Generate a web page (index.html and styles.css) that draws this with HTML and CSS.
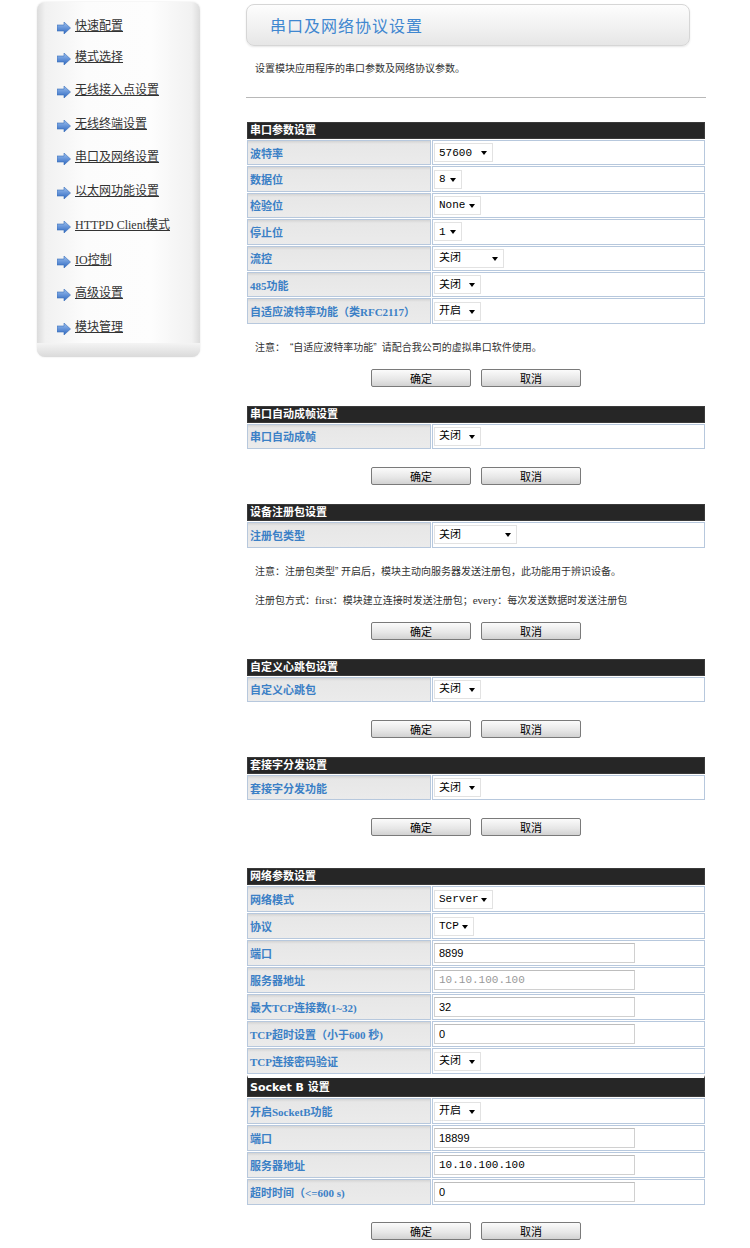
FILE: index.html
```html
<!DOCTYPE html>
<html lang="zh-CN">
<head>
    <meta charset="UTF-8">
    <title>串口及网络协议设置</title>
    <link rel="stylesheet" href="styles.css">
</head>
<body>

<div class="page">
    <!-- 左侧菜单 -->
    <div class="sidebar">
        <ul class="menu">
            <li><svg class="arrow" viewBox="0 0 14 12"><defs><linearGradient id="ag" x1="0" y1="0" x2="0" y2="1"><stop offset="0" stop-color="#9cc0f0"/><stop offset="1" stop-color="#2f68c0"/></linearGradient></defs><polygon points="0,3 7,3 7,0 13.5,6 7,12 7,9 0,9" fill="url(#ag)" stroke="#3a6fb8" stroke-width="0.6"/></svg><a href="#">快速配置</a></li>
            <li><svg class="arrow" viewBox="0 0 14 12"><polygon points="0,3 7,3 7,0 13.5,6 7,12 7,9 0,9" fill="url(#ag)" stroke="#3a6fb8" stroke-width="0.6"/></svg><a href="#">模式选择</a></li>
            <li><svg class="arrow" viewBox="0 0 14 12"><polygon points="0,3 7,3 7,0 13.5,6 7,12 7,9 0,9" fill="url(#ag)" stroke="#3a6fb8" stroke-width="0.6"/></svg><a href="#">无线接入点设置</a></li>
            <li><svg class="arrow" viewBox="0 0 14 12"><polygon points="0,3 7,3 7,0 13.5,6 7,12 7,9 0,9" fill="url(#ag)" stroke="#3a6fb8" stroke-width="0.6"/></svg><a href="#">无线终端设置</a></li>
            <li><svg class="arrow" viewBox="0 0 14 12"><polygon points="0,3 7,3 7,0 13.5,6 7,12 7,9 0,9" fill="url(#ag)" stroke="#3a6fb8" stroke-width="0.6"/></svg><a href="#">串口及网络设置</a></li>
            <li><svg class="arrow" viewBox="0 0 14 12"><polygon points="0,3 7,3 7,0 13.5,6 7,12 7,9 0,9" fill="url(#ag)" stroke="#3a6fb8" stroke-width="0.6"/></svg><a href="#">以太网功能设置</a></li>
            <li class="tall"><svg class="arrow" viewBox="0 0 14 12"><polygon points="0,3 7,3 7,0 13.5,6 7,12 7,9 0,9" fill="url(#ag)" stroke="#3a6fb8" stroke-width="0.6"/></svg><a href="#">HTTPD Client模式</a></li>
            <li><svg class="arrow" viewBox="0 0 14 12"><polygon points="0,3 7,3 7,0 13.5,6 7,12 7,9 0,9" fill="url(#ag)" stroke="#3a6fb8" stroke-width="0.6"/></svg><a href="#">IO控制</a></li>
            <li><svg class="arrow" viewBox="0 0 14 12"><polygon points="0,3 7,3 7,0 13.5,6 7,12 7,9 0,9" fill="url(#ag)" stroke="#3a6fb8" stroke-width="0.6"/></svg><a href="#">高级设置</a></li>
            <li><svg class="arrow" viewBox="0 0 14 12"><polygon points="0,3 7,3 7,0 13.5,6 7,12 7,9 0,9" fill="url(#ag)" stroke="#3a6fb8" stroke-width="0.6"/></svg><a href="#">模块管理</a></li>
        </ul>
        <div class="menu-foot"></div>
    </div>

    <div class="main">
        <div class="title-box"><h1>串口及网络协议设置</h1></div>
        <p class="intro">设置模块应用程序的串口参数及网络协议参数。</p>
        <hr class="line">

        <!-- 串口参数 -->
        <form class="section">
            <table class="cfg">
                <tr><th colspan="2">串口参数设置</th></tr>
                <tr>
                    <td class="lbl">波特率</td>
                    <td class="val"><span class="sel w59"><select><option>57600</option></select></span></td>
                </tr>
                <tr>
                    <td class="lbl">数据位</td>
                    <td class="val"><span class="sel w28"><select><option>8</option></select></span></td>
                </tr>
                <tr>
                    <td class="lbl">检验位</td>
                    <td class="val"><span class="sel w47"><select><option>None</option></select></span></td>
                </tr>
                <tr>
                    <td class="lbl">停止位</td>
                    <td class="val"><span class="sel w28"><select><option>1</option></select></span></td>
                </tr>
                <tr>
                    <td class="lbl">流控</td>
                    <td class="val"><span class="sel w70"><select><option>关闭</option></select></span></td>
                </tr>
                <tr>
                    <td class="lbl">485功能</td>
                    <td class="val"><span class="sel w47"><select><option>关闭</option></select></span></td>
                </tr>
                <tr>
                    <td class="lbl">自适应波特率功能（类RFC2117）</td>
                    <td class="val"><span class="sel w47"><select><option>开启</option></select></span></td>
                </tr>
            </table>
            <p class="note">注意：<span class="ql">“</span>自适应波特率功能<span class="qr">”</span>请配合我公司的虚拟串口软件使用。</p>
            <div class="btns"><button type="button">确定</button><button type="button">取消</button></div>
        </form>

        <form class="section">
            <table class="cfg">
                <tr><th colspan="2">串口自动成帧设置</th></tr>
                <tr>
                    <td class="lbl">串口自动成帧</td>
                    <td class="val"><span class="sel w47"><select><option>关闭</option></select></span></td>
                </tr>
            </table>
            <div class="btns"><button type="button">确定</button><button type="button">取消</button></div>
        </form>

        <form class="section">
            <table class="cfg">
                <tr><th colspan="2">设备注册包设置</th></tr>
                <tr>
                    <td class="lbl">注册包类型</td>
                    <td class="val"><span class="sel w83"><select><option>关闭</option></select></span></td>
                </tr>
            </table>
            <p class="note">注意：注册包类型” 开启后，模块主动向服务器发送注册包，此功能用于辨识设备。</p>
            <p class="note">注册包方式：<span class="lat">first</span>：模块建立连接时发送注册包；<span class="lat">every</span>：每次发送数据时发送注册包</p>
            <div class="btns"><button type="button">确定</button><button type="button">取消</button></div>
        </form>

        <form class="section">
            <table class="cfg">
                <tr><th colspan="2">自定义心跳包设置</th></tr>
                <tr>
                    <td class="lbl">自定义心跳包</td>
                    <td class="val"><span class="sel w47"><select><option>关闭</option></select></span></td>
                </tr>
            </table>
            <div class="btns"><button type="button">确定</button><button type="button">取消</button></div>
        </form>

        <form class="section">
            <table class="cfg">
                <tr><th colspan="2">套接字分发设置</th></tr>
                <tr>
                    <td class="lbl">套接字分发功能</td>
                    <td class="val"><span class="sel w47"><select><option>关闭</option></select></span></td>
                </tr>
            </table>
            <div class="btns"><button type="button">确定</button><button type="button">取消</button></div>
        </form>

        <!-- 网络参数 -->
        <form class="section net-section">
            <table class="cfg net">
                <tr><th colspan="2">网络参数设置</th></tr>
                <tr>
                    <td class="lbl">网络模式</td>
                    <td class="val"><span class="sel w59"><select><option>Server</option></select></span></td>
                </tr>
                <tr>
                    <td class="lbl">协议</td>
                    <td class="val"><span class="sel w40"><select><option>TCP</option></select></span></td>
                </tr>
                <tr>
                    <td class="lbl">端口</td>
                    <td class="val"><input type="text" value="8899"></td>
                </tr>
                <tr>
                    <td class="lbl">服务器地址</td>
                    <td class="val"><input type="text" class="mono" value="10.10.100.100" disabled></td>
                </tr>
                <tr>
                    <td class="lbl">最大TCP连接数(1~32)</td>
                    <td class="val"><input type="text" value="32"></td>
                </tr>
                <tr>
                    <td class="lbl">TCP超时设置（小于600 秒)</td>
                    <td class="val"><input type="text" value="0"></td>
                </tr>
                <tr>
                    <td class="lbl">TCP连接密码验证</td>
                    <td class="val"><span class="sel w47"><select><option>关闭</option></select></span></td>
                </tr>
                <tr><th colspan="2" class="sub">Socket B 设置</th></tr>
                <tr>
                    <td class="lbl">开启SocketB功能</td>
                    <td class="val"><span class="sel w47"><select><option>开启</option></select></span></td>
                </tr>
                <tr>
                    <td class="lbl">端口</td>
                    <td class="val"><input type="text" value="18899"></td>
                </tr>
                <tr>
                    <td class="lbl">服务器地址</td>
                    <td class="val"><input type="text" class="mono" value="10.10.100.100"></td>
                </tr>
                <tr>
                    <td class="lbl">超时时间（&lt;=600 s)</td>
                    <td class="val"><input type="text" value="0"></td>
                </tr>
            </table>
            <div class="btns"><button type="button">确定</button><button type="button">取消</button></div>
        </form>
    </div>
</div>

</body>
</html>
```

FILE: styles.css
```css
body {
    margin: 0;
    background: #fff;
    color: #333;
    font-family: "Liberation Sans", "Noto Sans CJK SC", sans-serif;
    font-size: 10px;
}
.page {
    display: flex;
    align-items: flex-start;
    padding-left: 37px;
}

/* sidebar */
.sidebar {
    width: 163px;
    margin-top: 2px;
    border-radius: 8px;
    background: linear-gradient(to right, #dcdcdc, #f1f1f1 5%, #fcfcfc 30%, #fdfdfd 70%, #f1f1f1 95%, #dcdcdc);
    box-shadow: 0 0 2px rgba(0, 0, 0, 0.12);
}
.menu {
    list-style: none;
    margin: 0;
    padding: 9px 0 0 20px;
}
.menu li {
    height: 33.5px;
    display: flex;
    align-items: center;
}
.menu li:first-child {
    height: 28px;
}
.menu li.tall {
    height: 35.5px;
}
.arrow {
    width: 14px;
    height: 12px;
    margin: 6px 4px 0 0;
    flex: none;
}
.menu a {
    color: #333;
    font-family: "Liberation Serif", "Noto Sans CJK SC", serif;
    font-size: 12px;
    text-decoration: underline;
}
.menu-foot {
    height: 14px;
    border-radius: 0 0 8px 8px;
    background: linear-gradient(#f4f4f4, #dadada);
}

/* main column */
.main {
    width: 460px;
    margin-left: 46px;
}
.title-box {
    width: 442px;
    height: 40px;
    margin-top: 4px;
    border: 1px solid #d6d6d6;
    border-radius: 8px;
    background: linear-gradient(#fdfdfd, #f0f0f0 60%, #e6e6e6);
    box-shadow: 0 1px 2px rgba(0, 0, 0, 0.1);
    display: flex;
    align-items: center;
}
.title-box h1 {
    margin: 0 0 0 23px;
    font-size: 16px;
    font-weight: normal;
    letter-spacing: 1px;
    color: #3f87d0;
}
.intro {
    margin: 16px 0 0 9px;
    line-height: 14px;
}
.line {
    margin: 21px 0 0;
    border: none;
    border-top: 1px solid #b8b8b8;
}

/* settings tables */
.section {
    margin: 23px 0 0;
}
.section + .section {
    margin-top: 18px;
}
.section.net-section {
    margin-top: 31px;
}
.cfg {
    width: 460px;
    border-collapse: separate;
    border-spacing: 1px;
}
.cfg th {
    height: 15px;
    padding: 0 2px;
    background: #262626;
    border: 1px solid #3a3a3a;
    color: #fff;
    font-size: 11px;
    font-weight: bold;
    text-align: left;
    line-height: 15px;
}
.cfg th.sub {
    height: 18px;
    border-top: 3px solid #fff;
    font-family: "DejaVu Sans", "Noto Sans CJK SC", sans-serif;
}
.cfg td {
    height: 23.4px;
    padding: 0 1px;
    border: 1px solid #b7c8dd;
}
.cfg.net td {
    height: 24px;
}
.lbl {
    width: 179px;
    background: linear-gradient(#d4d4d4, #e7e7e7 3px, #ebebeb);
    color: #3b80c6;
    font-family: "Liberation Serif", "Noto Sans CJK SC", serif;
    font-size: 11px;
    font-weight: bold;
    padding-left: 2px !important;
}
.val {
    background: #fff;
}

/* select boxes */
.sel {
    position: relative;
    display: inline-block;
    vertical-align: middle;
}
.sel::after {
    content: "";
    position: absolute;
    right: 6px;
    top: 8px;
    border-left: 3.5px solid transparent;
    border-right: 3.5px solid transparent;
    border-top: 4px solid #000;
}
.sel select {
    -webkit-appearance: none;
    appearance: none;
    width: 100%;
    height: 19px;
    margin: 0;
    padding: 0 0 0 4px;
    border: 1px solid #e2e2e2;
    border-radius: 0;
    background: #fff;
    color: #000;
    font-family: "Liberation Mono", "Noto Sans CJK SC", monospace;
    font-size: 11px;
}
.w28 { width: 28px; }
.w40 { width: 40px; }
.w47 { width: 47px; }
.w59 { width: 59px; }
.w70 { width: 70px; }
.w83 { width: 83px; }

.val input {
    width: 201px;
    height: 20px;
    box-sizing: border-box;
    margin: 0;
    padding: 0 4px;
    border: 1px solid #d0d0d0;
    border-top-color: #bdbdbd;
    background: #fff;
    color: #000;
    font-family: "Liberation Sans", sans-serif;
    font-size: 11px;
    vertical-align: middle;
}
.val input.mono {
    font-family: "Liberation Mono", monospace;
}
.val input:disabled {
    color: #999;
}

.note {
    margin: 16px 0 0 9px;
    line-height: 14px;
}
.note + .note {
    margin-top: 14px;
}
/* full-width quote marks */
.ql {
    padding-left: 5px;
}
.qr {
    padding-right: 5px;
}
.lat {
    font-family: "Liberation Serif", serif;
    font-size: 11px;
}

/* buttons */
.btns {
    display: flex;
    justify-content: center;
    gap: 10px;
    margin-top: 17px;
}
.note + .btns {
    margin-top: 14px;
}
.section:last-child .btns {
    margin-top: 16px;
}
.btns button {
    width: 100px;
    height: 18px;
    padding: 0;
    border: 1px solid #7a7a7a;
    border-radius: 2px;
    background: linear-gradient(#fbfbfb, #e6e6e6 60%, #d2d2d2);
    color: #000;
    font-family: "Liberation Sans", "Noto Sans CJK SC", sans-serif;
    font-size: 11px;
    cursor: pointer;
}
```
